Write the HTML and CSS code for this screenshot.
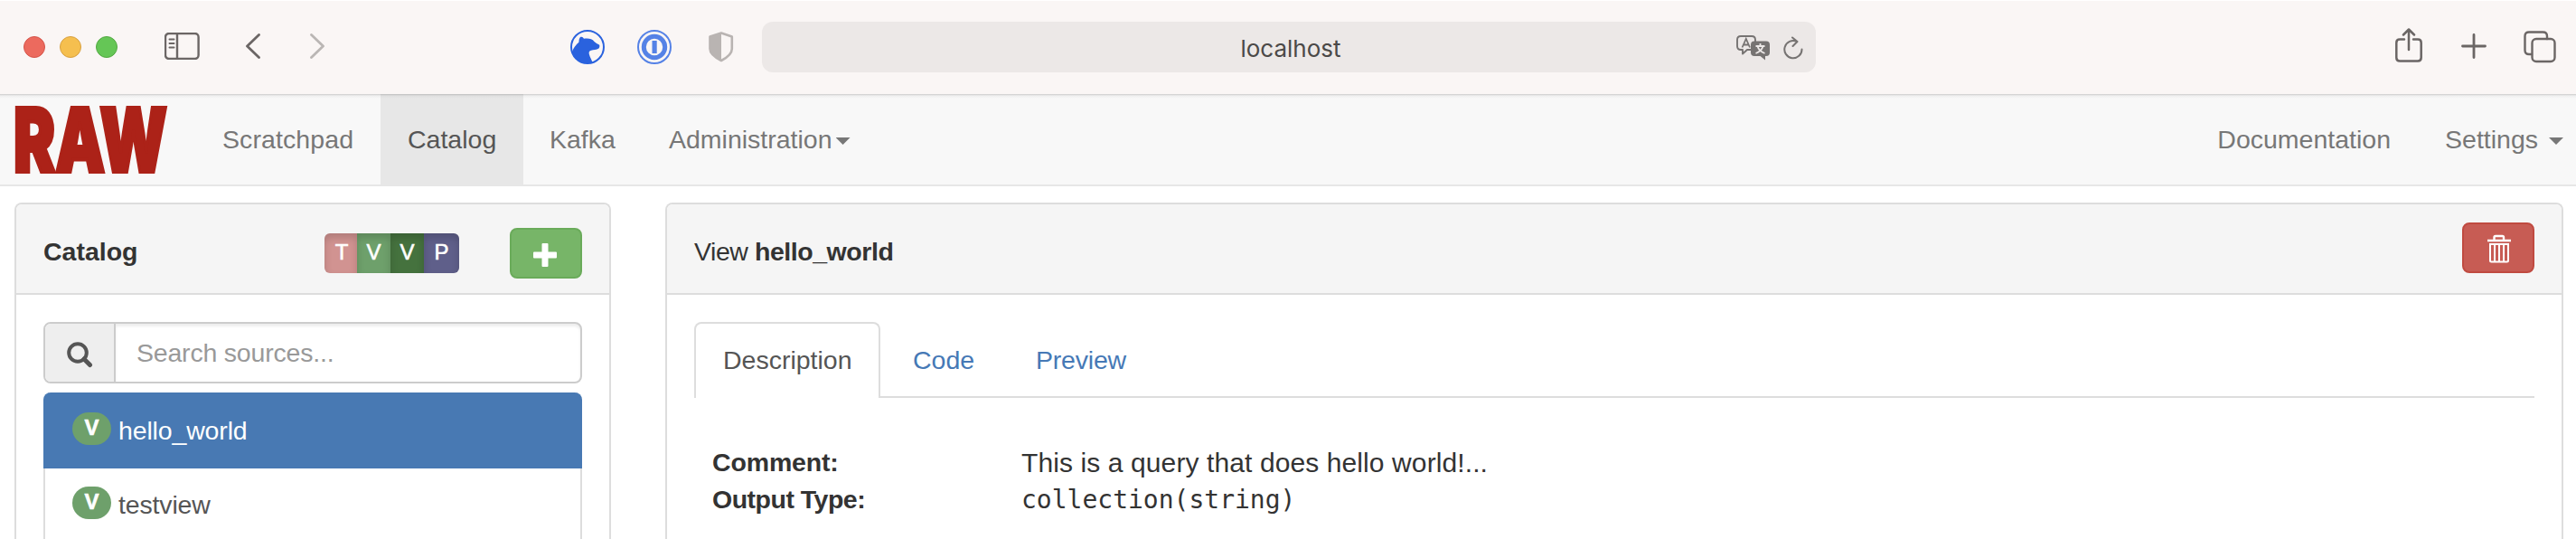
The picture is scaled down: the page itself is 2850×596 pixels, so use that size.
FILE: index.html
```html
<!DOCTYPE html>
<html lang="en">
<head>
<meta charset="utf-8">
<title>RAW - Catalog</title>
<link rel="stylesheet" href="styles.css">
</head>
<body>
<header class="toolbar">
  <div class="lights"><i class="light close"></i><i class="light minimize"></i><i class="light zoom"></i></div>
  <svg class="ico ico-sidebar" width="39" height="30" viewBox="0 0 39 30"><rect x="1" y="1" width="36.6" height="28" rx="4" /><path d="M14 1v28"/><path class="thin" d="M5.5 7.500h5M5.500 12h5M5.500 16.500h5"/></svg>
  <svg class="ico ico-back" width="16" height="28" viewBox="0 0 16 28"><path d="M14.500 1.500L1.500 14l13 12.500"/></svg>
  <svg class="ico ico-forward" width="16" height="28" viewBox="0 0 16 28"><path d="M1.500 1.500L14.500 14l-13 12.500"/></svg>
  <svg class="ico-bear" width="38" height="38" viewBox="0 0 38 38"><circle cx="19" cy="19" r="18" fill="none" stroke="#2a62de" stroke-width="2"/><path fill="#2a62de" d="M2 25C3 20 6.500 16.500 9.500 13.500c0-2 .3-4 1.500-5.500 1.500-.8 3-.3 4 1.800 5-.6 9 0 11.500 3.200 1.500 1.700 3.500 2.200 5.500 3.500.8 1.500.3 3-.5 4-2.500 1.800-6 1.500-8.500 2.200-2.500.8-2.700 2.300-2 4.800.6 2.500 2.500 5.500 3.500 8.500A18 18 0 0 1 2 25z"/></svg>
  <svg class="ico-key" width="38" height="38" viewBox="0 0 38 38"><circle cx="19" cy="19" r="18" fill="none" stroke="#5582e6" stroke-width="2"/><circle cx="19" cy="19" r="11.700" fill="none" stroke="#5582e6" stroke-width="5"/><path fill="#5582e6" d="M16.500 12h5.200v14h-5.200z"/></svg>
  <svg class="ico-shield" width="28" height="34" viewBox="0 0 28 34"><path fill="none" stroke="#b9b4b2" stroke-width="2.600" stroke-linejoin="round" d="M14 1.500L25.800 5.500V19c0 5-4 9-11.800 13C6 28 1.500 24 1.500 19V5.500z"/><path fill="#b9b4b2" d="M14 1.500v30.500C6 28 1.500 24 1.500 19V5.500z"/></svg>
  <div class="address">
    <span class="host">localhost</span>
    <svg class="ico-translate" width="38" height="28" viewBox="0 0 38 28"><path fill="none" stroke="#767372" stroke-width="1.900" stroke-linejoin="round" d="M16 16h-4l-5 4.500V16H5q-4 0-4-4V5q0-4 4-4h12q4 0 4 4v2"/><path fill="none" stroke="#767372" stroke-width="1.800" d="M6.500 13.500L10.800 4l4.200 9.500M8 10.500h5.500"/><path fill="#767372" d="M20 6.500h13q4 0 4 4V19q0 4-4 4h-1v4.500L26.500 23H20q-4 0-4-4v-8.500q0-4 4-4z"/><path fill="none" stroke="#ece8e7" stroke-width="1.800" d="M21.500 12h10M26.500 9v3M29.500 12c-1 4-4 6.500-8 8M23.500 12c1 4 4 6.500 8 8"/></svg>
    <svg class="ico-reload" width="22" height="26" viewBox="0 0 22 26"><path fill="none" stroke="#767372" stroke-width="2" stroke-linecap="round" stroke-linejoin="round" d="M20.500 14.500A9.600 9.600 0 1 1 15 6M10 1.500l5.500 4.500-5 5"/></svg>
  </div>
  <svg class="ico ico-share" width="30" height="38" viewBox="0 0 30 38"><path d="M10 12.500H5q-3.700 0-3.700 3.700v16.500q0 3.700 3.700 3.700h20q3.700 0 3.700-3.700V16.200q0-3.700-3.700-3.700h-5M15 24V2M9 7.500L15 1.500l6 6"/></svg>
  <svg class="ico ico-new" width="28" height="28" viewBox="0 0 28 28"><path d="M14 1.500v25M1.500 14h25"/></svg>
  <svg class="ico ico-tabs" width="36" height="36" viewBox="0 0 36 36"><rect x="9.500" y="9" width="25" height="25" rx="4.500"/><path d="M9 26H6q-4.500 0-4.500-4.500V6Q1.500 1.500 6 1.500h15.500Q26 1.500 26 6v3"/></svg>
</header>

<nav class="navbar">
  <a class="brand"><svg class="logo" width="172" height="78" viewBox="0 0 172 78"><text x="-1" y="75" textLength="170" lengthAdjust="spacingAndGlyphs">RAW</text></svg></a>
  <a class="nav-item scratch">Scratchpad</a>
  <a class="nav-item active">Catalog</a>
  <a class="nav-item kafka">Kafka</a>
  <a class="nav-item admin">Administration<i class="caret"></i></a>
  <a class="nav-item docs">Documentation</a>
  <a class="nav-item settings">Settings<i class="caret"></i></a>
</nav>

<main class="content">
  <section class="panel sidebar">
    <div class="panel-heading">
      <b class="title">Catalog</b>
      <div class="filters"><span class="f-table">T</span><span class="f-view">V</span><span class="f-mat">V</span><span class="f-pkg">P</span></div>
      <button class="btn add"><svg width="28" height="28" viewBox="0 0 28 28"><path fill="#fff" d="M11.500 1h5q1 0 1 1v8.500H26q1 0 1 1v5q0 1-1 1h-8.500V26q0 1-1 1h-5q-1 0-1-1v-8.500H2q-1 0-1-1v-5q0-1 1-1h8.500V2q0-1 1-1z"/></svg></button>
    </div>
    <div class="panel-body">
      <div class="search"><span class="addon"><svg width="30" height="30" viewBox="0 0 30 30"><g fill="none" stroke="#555"><circle cx="13" cy="13" r="9.800" stroke-width="4"/><path d="M20 20l6.500 6.500" stroke-width="5" stroke-linecap="round"/></g></svg></span><span class="field">Search sources...</span></div>
      <ul class="list">
        <li class="selected"><span class="badge">V</span><span>hello_world</span></li>
        <li><span class="badge">V</span><span>testview</span></li>
      </ul>
    </div>
  </section>
  <section class="panel detail">
    <div class="panel-heading">
      <span class="view-title">View <b>hello_world</b></span>
      <button class="btn delete"><svg width="28" height="32" viewBox="0 0 28 32"><g fill="none" stroke="#fff"><path stroke-width="2.400" d="M1 7h26M8.500 6.500V3.500q0-1.500 1.500-1.500h7.500q1.500 0 1.500 1.500v3"/><path stroke-width="2" d="M4 11h20M4 10v19q0 1.500 1.500 1.500h17q1.500 0 1.500-1.500V10M9 11v19M14 11v19M19 11v19"/></g></svg></button>
    </div>
    <div class="panel-body">
      <div class="tabs"><a class="tab current">Description</a><a class="tab code">Code</a><a class="tab preview">Preview</a></div>
      <dl class="facts">
        <dt>Comment:</dt><dd>This is a query that does hello world!...</dd>
        <dt class="output">Output Type:</dt><dd class="mono">collection(string)</dd>
      </dl>
    </div>
  </section>
</main>
</body>
</html>
```
FILE: styles.css
```css
* { box-sizing: border-box; }
body {
  margin: 0;
  height: 596px;
  overflow: hidden;
  background: #fff;
  color: #333;
  font: 28.5px/40px "Liberation Sans", Arial, sans-serif;
}
svg { display: block; flex: none; }

/* browser toolbar */
.toolbar {
  display: flex;
  height: 104px;
  align-items: flex-start;
  background: #faf6f5;
  border-top: 1px solid #fff;
}
.lights { display: flex; gap: 16px; margin: 39px 0 0 26px; }
.light { width: 24px; height: 24px; border-radius: 50%; border: 1px solid; }
.close { background: #ec6a5e; border-color: #d5544a; }
.minimize { background: #f5bf4f; border-color: #d8a040; }
.zoom { background: #65c656; border-color: #53a842; }
.ico { fill: none; stroke: #6b6665; stroke-width: 2.8; stroke-linecap: round; stroke-linejoin: round; }
.ico .thin { stroke-width: 2; }
.ico-sidebar { margin: 35px 0 0 52px; stroke-width: 2.4; }
.ico-back { margin: 36px 0 0 51px; }
.ico-forward { margin: 36px 0 0 55px; stroke: #bab6b4; }
.ico-bear { margin: 32px 0 0 272px; }
.ico-key { margin: 32px 0 0 36px; }
.ico-shield { margin: 34px 0 0 41px; }
.address {
  position: relative;
  display: flex;
  justify-content: flex-end;
  width: 1166px;
  height: 56px;
  margin: 23px 0 0 31px;
  border-radius: 12px;
  background: #ece8e7;
}
.host {
  position: absolute;
  left: 0;
  right: 0;
  top: 10px;
  padding-left: 4px;
  text-align: center;
  color: #4b4948;
  font: 26px/40px Inter, sans-serif;
}
.ico-translate { margin: 15px 14px 0 0; }
.ico-reload { margin: 16px 14px 0 0; }
.ico-share { margin: 30px 0 0 641px; stroke-width: 2.5; }
.ico-new { margin: 36px 0 0 43px; }
.ico-tabs { margin: 33px 0 0 41px; stroke-width: 2.4; }

/* site navigation */
.navbar {
  display: flex;
  height: 102px;
  border-bottom: 2px solid #e7e7e7;
  background: linear-gradient(#cbcbcb 0, #dedede 1px, #efefef 2px, #f8f8f8 5px);
  color: #777;
}
.brand { padding: 11px 0 0 16px; width: 216px; }
.logo {
  overflow: visible;
  font: 900 98px/98px Inter, sans-serif;
  fill: #ac2218;
  stroke: #ac2218;
  stroke-width: 4;
}
.nav-item { display: flex; padding: 30px 30px 0; white-space: nowrap; }
.scratch { width: 205px; letter-spacing: .1px; }
.active {
  width: 158px;
  height: 102px;
  color: #555;
  background: linear-gradient(#bdbdbd 0, #cfcfcf 1px, #dfdfdf 2px, #e7e7e7 5px);
}
.kafka { width: 131px; padding-left: 29px; }
.caret {
  margin: 18px 0 0 4px;
  width: 16px;
  height: 8px;
  background: #777;
  clip-path: polygon(0 0, 100% 0, 50% 100%);
}
.docs { margin-left: auto; padding-right: 30px; }
.settings { padding-right: 14px; }
.settings .caret { margin-left: 12px; }

/* panels */
.content { display: flex; gap: 60px; padding: 18px 14px 0 16px; }
.panel { height: 372px; border: 2px solid #ddd; border-bottom: 0; border-radius: 8px 8px 0 0; }
.sidebar { width: 660px; }
.detail { width: 2100px; }
.panel-heading {
  display: flex;
  align-items: flex-start;
  height: 100px;
  padding: 0 30px;
  border-bottom: 2px solid #ddd;
  border-radius: 6px 6px 0 0;
  background: #f5f5f5;
}
.panel-body { padding: 30px 30px 0; }
.title, .view-title { margin-top: 32px; }
.view-title { letter-spacing: -.45px; }
.btn {
  display: flex;
  justify-content: center;
  width: 80px;
  height: 56px;
  padding: 0;
  border: 2px solid;
  border-radius: 8px;
}
.add { margin-top: 26px; background: #77b568; border-color: #6aab5a; }
.add svg { margin: 14px 0 0 -3px; }
.delete { margin: 20px 0 0 auto; background: #c75c54; border-color: #c04a40; }
.delete svg { margin: 11px 0 0 2px; }
.filters { display: flex; height: 44px; margin: 32px 56px 0 auto; }
.filters span {
  width: 37px;
  color: #fff;
  font-size: 24px;
  line-height: 42px;
  text-align: center;
  -webkit-text-stroke: .6px #fff;
  box-shadow: inset 0 5px 9px rgba(0, 0, 0, .16);
}
.filters .f-table { width: 36px; padding-left: 2px; background: #d19391; border-radius: 6px 0 0 6px; }
.f-view { background: #6ea06b; }
.f-mat { background: #45723e; }
.filters .f-pkg { width: 39px; background: #5f5f8a; border-radius: 0 6px 6px 0; }

.search { display: flex; height: 68px; border: 2px solid #ccc; border-radius: 8px; }
.addon {
  width: 78px;
  padding: 19px 0 0 23px;
  border-right: 2px solid #ccc;
  border-radius: 6px 0 0 6px;
  background: #eee;
}
.field {
  flex: 1;
  padding: 12px 0 0 23px;
  color: #999;
  letter-spacing: -.2px;
  border-radius: 0 6px 6px 0;
  box-shadow: inset 0 3px 3px rgba(0, 0, 0, .07);
}
.list { margin: 10px 0 0; padding: 0; list-style: none; }
.list li {
  display: flex;
  height: 78px;
  padding: 20px 30px 0;
  border: 2px solid #ddd;
  border-width: 0 2px;
  color: #555;
  letter-spacing: -.15px;
}
.list .selected {
  height: 84px;
  padding-top: 22px;
  color: #fff;
  background: #4879b3;
  border-color: #4879b3;
  border-radius: 8px 8px 0 0;
}
.badge {
  width: 43px;
  height: 36px;
  margin-right: 8px;
  border-radius: 18px;
  color: #fff;
  background: #6ea06b;
  font-size: 24px;
  font-weight: bold;
  line-height: 34px;
  text-align: center;
  -webkit-text-stroke: .6px #fff;
}

/* view details */
.tabs { display: flex; height: 84px; border-bottom: 2px solid #ddd; }
.tab { padding-top: 22px; color: #4679b6; }
.current {
  width: 206px;
  height: 84px;
  padding: 20px 0 0 30px;
  color: #555;
  background: #fff;
  border: 2px solid #ddd;
  border-bottom: 0;
  border-radius: 8px 8px 0 0;
}
.code { padding-left: 36px; width: 172px; }
.preview { letter-spacing: -.2px; }
.facts {
  display: grid;
  grid-template-columns: 342px 1fr;
  grid-auto-rows: 41px;
  margin: 51px 0 0 20px;
}
dt { font-weight: bold; line-height: 40px; letter-spacing: -.15px; }
dd { margin: 0; font-size: 30px; line-height: 42px; letter-spacing: .1px; white-space: nowrap; }
.output { letter-spacing: -.5px; }
.mono { font: 28px/42px "DejaVu Sans Mono", monospace; letter-spacing: 0; }
```
